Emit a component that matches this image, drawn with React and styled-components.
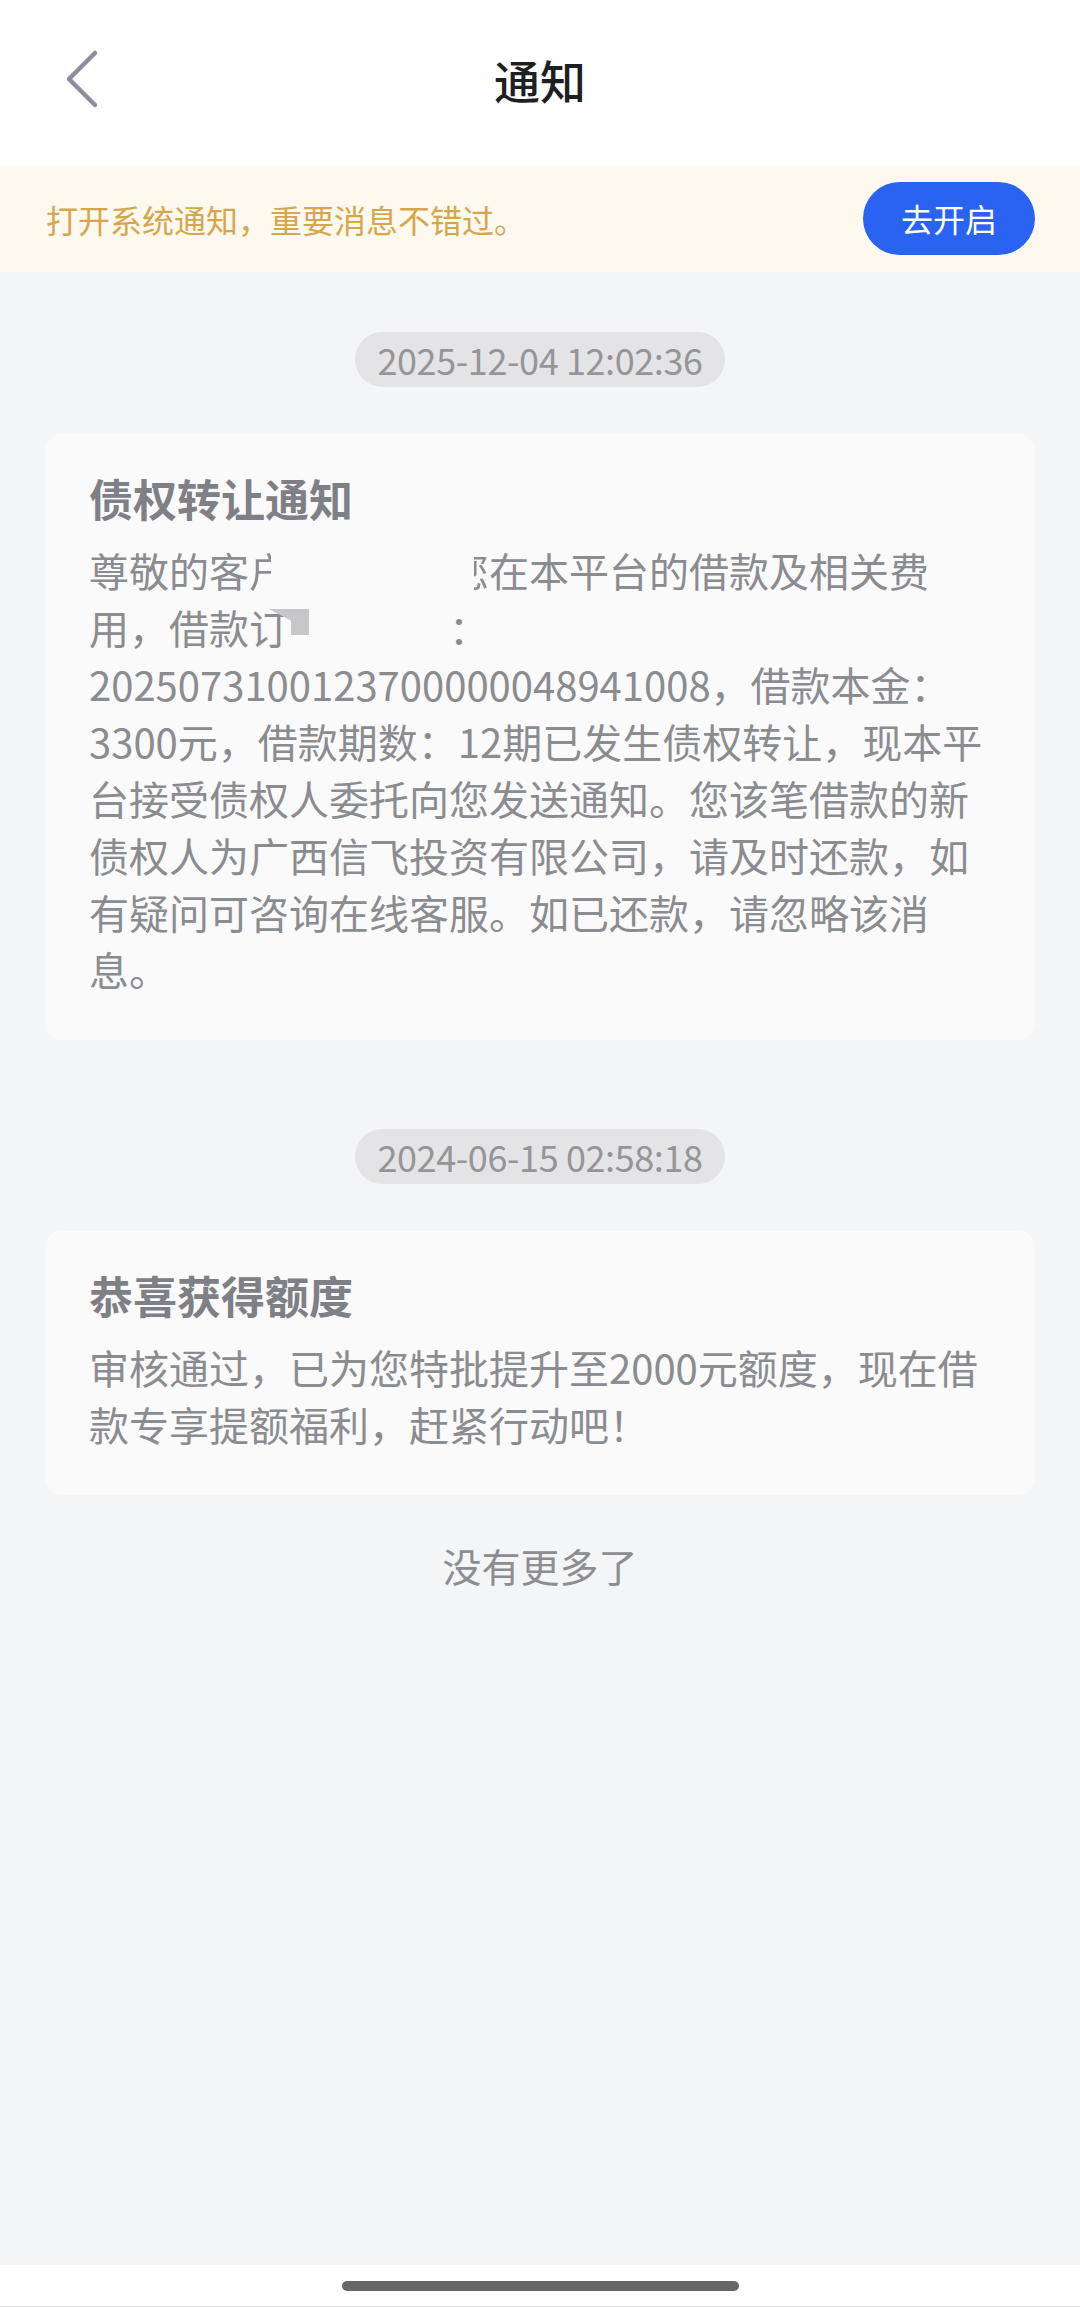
import React from "react";
import styled, { createGlobalStyle } from "styled-components";

const GlobalStyle = createGlobalStyle`
  html, body {
    margin: 0;
    padding: 0;
    background: #f4f5f7;
  }
  body {
    font-family: "Noto Sans CJK SC", "Noto Sans", sans-serif;
    -webkit-font-smoothing: antialiased;
  }
  * { box-sizing: border-box; }
`;

const Page = styled.div`
  width: 1080px;
  min-height: 2307px;
  display: flex;
  flex-direction: column;
  background: #f4f5f7;
`;

const Header = styled.header`
  height: 165px;
  background: #ffffff;
  display: grid;
  grid-template-columns: 1fr auto 1fr;
  align-items: center;
  padding: 0 0 8px 0;
`;

const BackButton = styled.button`
  justify-self: start;
  margin-left: 60px;
  width: 44px;
  height: 64px;
  border: none;
  background: transparent;
  padding: 0;
  display: flex;
  align-items: center;
  justify-content: center;
  cursor: pointer;
`;

const Title = styled.h1`
  margin: 0;
  font-size: 46px;
  line-height: 64px;
  font-weight: 500;
  color: #1f1f21;
`;

const Banner = styled.div`
  height: 107px;
  background: #fdf9ee;
  display: flex;
  align-items: center;
  justify-content: space-between;
  padding: 0 45px 0 46px;
`;

const BannerText = styled.span`
  font-size: 32px;
  line-height: 44px;
  color: #d6a64d;
`;

const EnableButton = styled.button`
  width: 172px;
  height: 73px;
  border: none;
  border-radius: 37px;
  background: #2a63f1;
  color: #ffffff;
  font-family: inherit;
  font-size: 32px;
  line-height: 73px;
  padding: 0;
  cursor: pointer;
`;

const List = styled.main`
  display: flex;
  flex-direction: column;
  gap: 89px;
  padding: 60px 45px 0 45px;
`;

const Item = styled.section`
  display: flex;
  flex-direction: column;
  align-items: center;
  gap: 47px;
`;

const TimePill = styled.div`
  height: 55px;
  padding: 0 22px;
  border-radius: 28px;
  background: #e4e4e6;
  color: #959597;
  font-size: 36px;
  line-height: 55px;
  letter-spacing: -0.4px;
`;

const Card = styled.article`
  align-self: stretch;
  background: #fafafa;
  border-radius: 16px;
  padding: 34px 41px 42px 44px;
  display: flex;
  flex-direction: column;
  gap: 14px;
`;

const CardTitle = styled.h2`
  margin: 0;
  font-size: 44px;
  line-height: 60px;
  font-weight: 700;
  color: #7f8086;
`;

const CardBody = styled.p`
  margin: 0;
  font-size: 40px;
  line-height: 57px;
  color: #8b8c90;
  word-break: normal;
  line-break: strict;
`;

const Redacted = styled.span`
  color: transparent;
  position: relative;
`;

/* a character only partly left visible by the redaction */
const PartialChar = styled.span`
  color: transparent;
  background-image: linear-gradient(
    to right,
    ${(p) => (p.$keep === "left" ? "#8b8c90 55%, transparent 55%" : "transparent 62%, #8b8c90 62%")}
  );
  -webkit-background-clip: text;
  background-clip: text;
`;

const Smudge = styled.span`
  position: absolute;
  left: -20px;
  top: 11px;
  width: 40px;
  height: 26px;
  background: #c7c7ca;
  clip-path: polygon(0 0, 100% 0, 100% 100%, 55% 100%, 55% 45%);
`;

const EndNote = styled.div`
  text-align: center;
  margin-top: 42px;
  font-size: 39px;
  line-height: 56px;
  color: #8d8d90;
`;

const Spacer = styled.div`
  flex: 1;
`;

const HomeBar = styled.div`
  height: 42px;
  background: #ffffff;
  display: flex;
  align-items: flex-start;
  justify-content: center;
  padding-top: 16px;
  border-bottom: 1px solid #dcdcdc;
`;

const HomeIndicator = styled.div`
  width: 397px;
  height: 10px;
  border-radius: 5px;
  background: #676767;
`;

const ChevronLeft = () => (
  <svg width="40" height="60" viewBox="0 0 40 60" fill="none">
    <polyline
      points="33,4 7,30 33,56"
      stroke="#8b8f99"
      strokeWidth="4.5"
      strokeLinecap="round"
      strokeLinejoin="round"
    />
  </svg>
);

export default function App() {
  return (
    <>
      <GlobalStyle />
      <Page>
        <Header>
          <BackButton aria-label="返回">
            <ChevronLeft />
          </BackButton>
          <Title>通知</Title>
          <span />
        </Header>

        <Banner>
          <BannerText>打开系统通知，重要消息不错过。</BannerText>
          <EnableButton>去开启</EnableButton>
        </Banner>

        <List>
          <Item>
            <TimePill>2025-12-04 12:02:36</TimePill>
            <Card>
              <CardTitle>债权转让通知</CardTitle>
              <CardBody>
                尊敬的客<PartialChar $keep="left">户</PartialChar>
                <Redacted>某某某，</Redacted>
                <PartialChar $keep="right">您</PartialChar>在本平台的借款及相关费用，借款订
                <Redacted>
                  <Smudge />
                  单编号为
                </Redacted>
                ：2025073100123700000048941008，借款本金：3300元，借款期数：12期已发生债权转让，现本平台接受债权人委托向您发送通知。您该笔借款的新债权人为广西信飞投资有限公司，请及时还款，如有疑问可咨询在线客服。如已还款，请忽略该消息。
              </CardBody>
            </Card>
          </Item>

          <Item>
            <TimePill>2024-06-15 02:58:18</TimePill>
            <Card>
              <CardTitle>恭喜获得额度</CardTitle>
              <CardBody>
                审核通过，已为您特批提升至2000元额度，现在借款专享提额福利，赶紧行动吧！
              </CardBody>
            </Card>
          </Item>
        </List>

        <EndNote>没有更多了</EndNote>
        <Spacer />
        <HomeBar>
          <HomeIndicator />
        </HomeBar>
      </Page>
    </>
  );
}
